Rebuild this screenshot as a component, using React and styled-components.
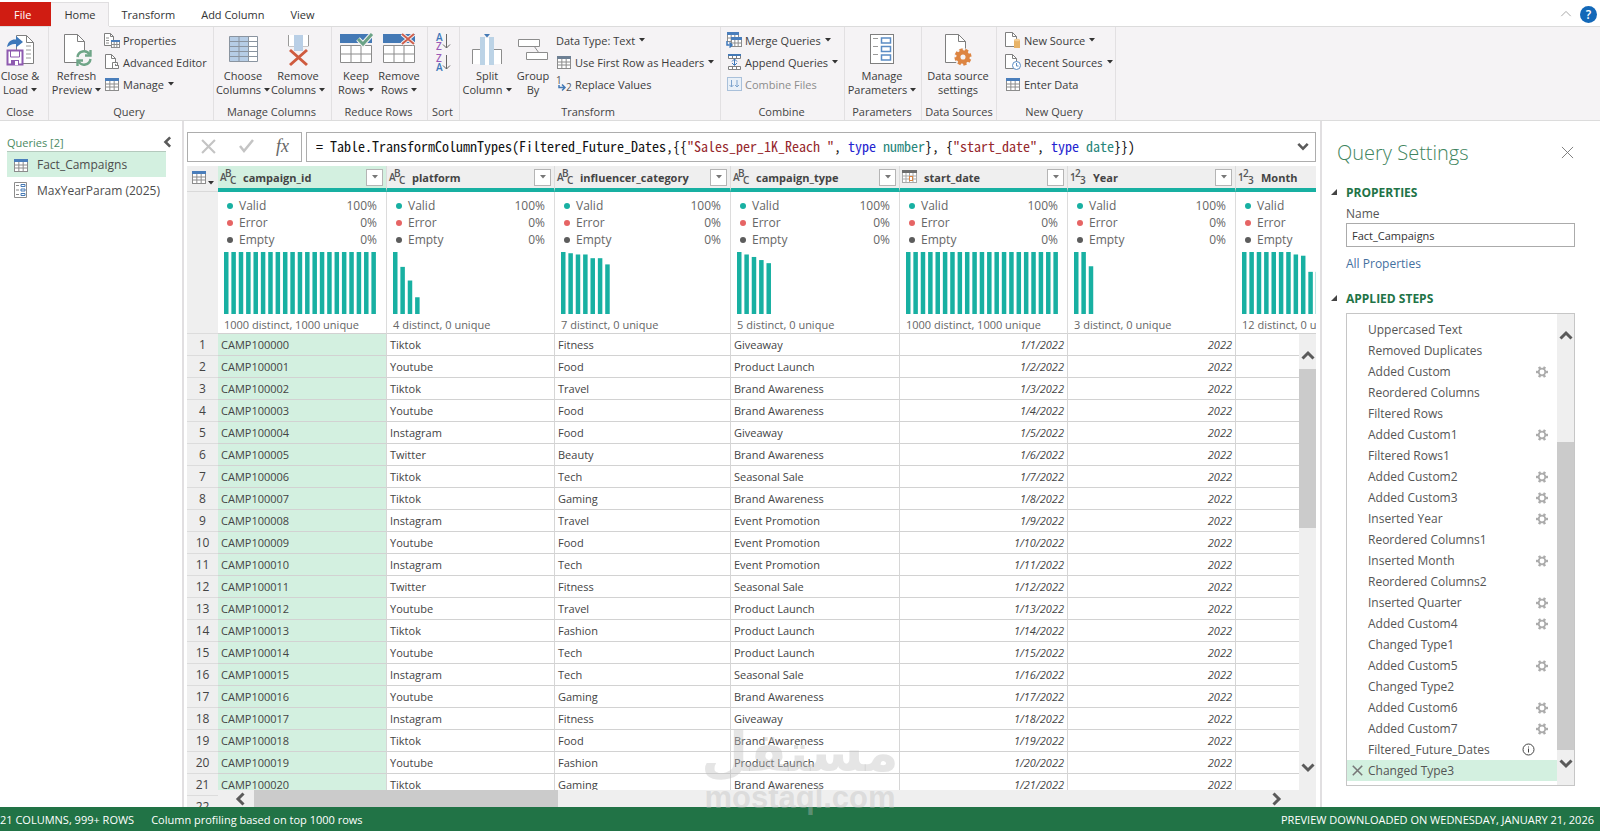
import React from 'react';
import styled, { createGlobalStyle } from 'styled-components';

const GlobalStyle = createGlobalStyle`
  * {
    box-sizing: border-box;
  }

  body {
    margin: 0;
    background: #fff;
    color: #3b3b3b;
    font-family: 'Open Sans', 'Noto Sans', sans-serif;
    font-size: 11px;
  }

  button {
    padding: 0;
    border: 0;
    background: none;
    color: inherit;
    font: inherit;
    cursor: pointer;
  }

  svg {
    display: block;
    flex: none;
    overflow: visible;
  }
`;

const VALUES = [
  ['Tiktok', 'Fitness', 'Giveaway'],
  ['Youtube', 'Food', 'Product Launch'],
  ['Tiktok', 'Travel', 'Brand Awareness'],
  ['Youtube', 'Food', 'Brand Awareness'],
  ['Instagram', 'Food', 'Giveaway'],
  ['Twitter', 'Beauty', 'Brand Awareness'],
  ['Tiktok', 'Tech', 'Seasonal Sale'],
  ['Tiktok', 'Gaming', 'Brand Awareness'],
  ['Instagram', 'Travel', 'Event Promotion'],
  ['Youtube', 'Food', 'Event Promotion'],
  ['Instagram', 'Tech', 'Event Promotion'],
  ['Twitter', 'Fitness', 'Seasonal Sale'],
  ['Youtube', 'Travel', 'Product Launch'],
  ['Tiktok', 'Fashion', 'Product Launch'],
  ['Youtube', 'Tech', 'Product Launch'],
  ['Instagram', 'Tech', 'Seasonal Sale'],
  ['Youtube', 'Gaming', 'Brand Awareness'],
  ['Instagram', 'Fitness', 'Giveaway'],
  ['Tiktok', 'Food', 'Brand Awareness'],
  ['Youtube', 'Fashion', 'Product Launch'],
  ['Tiktok', 'Gaming', 'Brand Awareness'],
];

const FULL = Array(21).fill(1);

const COLUMNS = [
  { name: 'campaign_id', type: 'text', width: 169, selected: true, summary: '1000 distinct, 1000 unique', bars: FULL },
  { name: 'platform', type: 'text', width: 168, summary: '4 distinct, 0 unique', bars: [1, 0.76, 0.54, 0.27] },
  { name: 'influencer_category', type: 'text', width: 176, summary: '7 distinct, 0 unique', bars: [1, 0.98, 0.96, 0.96, 0.9, 0.9, 0.8] },
  { name: 'campaign_type', type: 'text', width: 169, summary: '5 distinct, 0 unique', bars: [1, 0.96, 0.92, 0.87, 0.82] },
  { name: 'start_date', type: 'date', width: 168, summary: '1000 distinct, 1000 unique', bars: FULL },
  { name: 'Year', type: 'number', width: 168, summary: '3 distinct, 0 unique', bars: [1, 1, 0.77] },
  { name: 'Month', type: 'number', width: 168, summary: '12 distinct, 0 unique', bars: [1, 1, 1, 1, 1, 1, 1, 0.96, 0.94, 0.68, 0.68, 0.68] },
];

const STEPS = [
  { name: 'Uppercased Text' },
  { name: 'Removed Duplicates' },
  { name: 'Added Custom', gear: true },
  { name: 'Reordered Columns' },
  { name: 'Filtered Rows' },
  { name: 'Added Custom1', gear: true },
  { name: 'Filtered Rows1' },
  { name: 'Added Custom2', gear: true },
  { name: 'Added Custom3', gear: true },
  { name: 'Inserted Year', gear: true },
  { name: 'Reordered Columns1' },
  { name: 'Inserted Month', gear: true },
  { name: 'Reordered Columns2' },
  { name: 'Inserted Quarter', gear: true },
  { name: 'Added Custom4', gear: true },
  { name: 'Changed Type1' },
  { name: 'Added Custom5', gear: true },
  { name: 'Changed Type2' },
  { name: 'Added Custom6', gear: true },
  { name: 'Added Custom7', gear: true },
  { name: 'Filtered_Future_Dates', info: true },
  { name: 'Changed Type3', selected: true },
];

/* ---------- icons ---------- */

const Caret = ({ color = '#333' }) => (
  <svg width="6" height="4" viewBox="0 0 6 4"><path d="M0 0h6L3 3.5z" fill={color} /></svg>
);

const Chevron = ({ dir = 'down', size = 14, color = '#5a5a5a', thick = 3 }) => {
  const turn = { down: 0, left: 90, up: 180, right: 270 }[dir];
  return (
    <svg width={size} height={size} viewBox="0 0 14 14">
      <path d="M1.5 4.5L7 10l5.500-5.500" fill="none" stroke={color} strokeWidth={thick} transform={`rotate(${turn} 7 7)`} />
    </svg>
  );
};

const Gear = ({ size = 12, color = '#acacac', teeth = 6, ring = 3 }) => (
  <svg width={size} height={size} viewBox="0 0 20 20">
    <circle cx="10" cy="10" r="5.500" fill="none" stroke={color} strokeWidth={ring} />
    {Array.from({ length: teeth }, (_, i) => (
      <rect key={i} x="8" y="0" width="4" height="4" fill={color} transform={`rotate(${(i * 360) / teeth + 30} 10 10)`} />
    ))}
  </svg>
);

const PageShape = ({ x = 0, y = 0, w = 20, h = 27, fold = 7 }) => (
  <g fill="#fff" stroke="#7f7f7f">
    <path d={`M${x} ${y}h${w - fold}l${fold} ${fold}v${h - fold}h${-w}z`} />
    <path d={`M${x + w - fold} ${y}v${fold}h${fold}`} fill="none" />
  </g>
);

const TableShape = ({ x = 0, y = 0, w = 13, h = 12, cols = 3, rows = 3, head = '#4a7ebb', headH = 3, line = '#8c8c8c' }) => (
  <g>
    <rect x={x + 0.5} y={y + 0.5} width={w} height={h} fill="#fff" stroke={line} />
    <path
      stroke={line}
      d={[
        ...Array.from({ length: cols - 1 }, (_, i) => `M${x + 0.5 + ((i + 1) * w) / cols} ${y + headH}V${y + h}`),
        ...Array.from({ length: rows - 1 }, (_, i) => `M${x} ${y + headH + ((i + 1) * (h - headH)) / rows}h${w}`),
      ].join('')}
    />
    <rect x={x} y={y} width={w + 1} height={headH} fill={head} />
  </g>
);

const CloseLoadIcon = () => (
  <svg width="30" height="34" viewBox="0 0 30 34">
    <PageShape x={11.5} y={2.5} w={17} h={28} />
    <path d="M21 13h5M21 17h5M21 21h5M21 25h5" stroke="#9a9a9a" />
    <path d="M2 14c1-6 5-8 9-7.500V3l7 6-7 5.500V11c-4-.5-6 1-9 3z" fill="#3d78ba" />
    <path d="M2.500 17.500h15v14h-15z" fill="#fff" stroke="#8e5ab0" strokeWidth="2" />
    <path d="M5.500 18h9v6h-9z" fill="#fff" stroke="#8e5ab0" />
    <path d="M6 27h8v5H6z" fill="#8e5ab0" />
    <path d="M10 28h3v4h-3z" fill="#fff" />
  </svg>
);

const RefreshIcon = () => (
  <svg width="30" height="34" viewBox="0 0 30 34">
    <PageShape x={2.5} y={1.5} w={20} h={28} />
    <circle cx="22" cy="25" r="8" fill="#f5f3f5" />
    <g fill="none" stroke="#6fa588" strokeWidth="2.400">
      <path d="M15.500 24a6.500 6.500 0 0 1 12-2.500M28.500 26a6.500 6.500 0 0 1-12 2.500" />
      <path d="M28.500 17v5.500H23M15.500 33v-5.500H21" />
    </g>
  </svg>
);

const ChooseColumnsIcon = () => (
  <svg width="30" height="34" viewBox="0 0 30 34">
    <rect x="1.500" y="3.500" width="28" height="25" fill="#fff" />
    <rect x="1.500" y="3.500" width="19" height="25" fill="#b6cde6" />
    <path d="M1.500 3.500h28v25h-28zM11 3v25M20.500 3v25M1 8.500h28M1 13.500h28M1 18.500h28M1 23.500h28" fill="none" stroke="#8a94a0" />
  </svg>
);

const RemoveColumnsIcon = () => (
  <svg width="30" height="34" viewBox="0 0 30 34">
    <path d="M5.500 2v11h6M25.500 2v11h-6" fill="none" stroke="#9a9a9a" />
    <path d="M6 2h5v11H6zM20 2h5v11h-5z" fill="#fff" />
    <path d="M11 2h9v16h-9z" fill="#b9cfe6" />
    <path d="M7 17l17 15M24 17L7 32" stroke="#cf5b3f" strokeWidth="3" />
  </svg>
);

const RowsIcon = ({ remove }) => (
  <svg width="34" height="34" viewBox="0 0 34 34">
    <rect x="1" y="1" width="32" height="9" fill="#4479b5" />
    <path d="M1.500 12.500h31v17h-31zM12 12.500v17M22 12.500v17M1 21h31" fill="#fff" stroke="#8c8c8c" />
    {remove ? (
      <path d="M20 1l12 10M32 1L20 11" stroke="#f5f3f5" strokeWidth="4" />
    ) : (
      <path d="M19 6l5 5 9-10" stroke="#f5f3f5" strokeWidth="5" fill="none" />
    )}
    {remove ? (
      <path d="M20 1l12 10M32 1L20 11" stroke="#cf5f4c" strokeWidth="2" />
    ) : (
      <path d="M19 6l5 5 9-10" stroke="#6ba386" strokeWidth="3" fill="none" />
    )}
  </svg>
);

const SortIcon = ({ top, bottom, topColor, bottomColor }) => (
  <svg width="16" height="18" viewBox="0 0 16 18" fontSize="10" fontWeight="600">
    <text x="0" y="8" fill={topColor}>{top}</text>
    <text x="0" y="17" fill={bottomColor}>{bottom}</text>
    <path d="M10.500 1v14M7 11.500l3.500 3.500 3.500-3.500" fill="none" stroke="#666" />
  </svg>
);

const SplitIcon = () => (
  <svg width="32" height="34" viewBox="0 0 32 34">
    <path d="M1.500 31V16.500h8V31M22.500 31V16.500h8V31" fill="#fff" stroke="#8c8c8c" />
    <path d="M9 4h5v28H9zM18 4h5v28h-5z" fill="#bcd3e6" />
    <path d="M14 5h4v27h-4z" fill="#fff" />
    <path d="M13 1h6l-3 3.500z" fill="#4479b5" />
  </svg>
);

const GroupIcon = () => (
  <svg width="32" height="34" viewBox="0 0 32 34">
    <path d="M17 13l5 7" stroke="#8c8c8c" />
    <path d="M1.500 6.500h21v7h-21zM9.500 19.500h21v7h-21z" fill="#fff" stroke="#8c8c8c" />
  </svg>
);

const ParametersIcon = () => (
  <svg width="26" height="34" viewBox="0 0 26 34">
    <rect x="1.500" y="1.500" width="23" height="29" fill="#fff" stroke="#7f7f7f" />
    <path d="M4 5.500h5M4 13.500h5M4 21.500h5" stroke="#999" />
    <path d="M12.500 5h9v5h-9zM12.500 13.500h9v5h-9zM12.500 22h9v5h-9z" fill="#fff" stroke="#5b8cc4" strokeWidth="1.500" />
  </svg>
);

const SourceSettingsIcon = () => (
  <svg width="28" height="34" viewBox="0 0 28 34">
    <PageShape x={1.5} y={1.5} w={20} h={28} />
    <circle cx="19" cy="24" r="9" fill="#f5f3f5" />
    <g transform="translate(10.500 15.500)">
      <Gear size={17} color="#dd8542" teeth={8} ring={5} />
    </g>
  </svg>
);

const SmallTableIcon = ({ head }) => (
  <svg width="16" height="16" viewBox="0 0 16 16">
    <TableShape x={1} y={2} w={13} h={12} head={head} />
  </svg>
);

const PropertiesIcon = () => (
  <svg width="16" height="16" viewBox="0 0 16 16">
    <PageShape x={0.5} y={1.5} w={9} h={12} fold={3} />
    <path d="M2 6h3M2 8.500h3M2 11h3" stroke="#8c8c8c" />
    <TableShape x={7} y={8} w={8} h={7} cols={3} rows={2} headH={2} />
  </svg>
);

const EditorIcon = () => (
  <svg width="16" height="16" viewBox="0 0 16 16">
    <PageShape x={1.5} y={0.5} w={10} h={14} fold={4} />
    <path d="M8.500 8.500h5v3h1M8.500 8.500v6h6v-3H11" fill="#fff" stroke="#7f7f7f" />
  </svg>
);

const ReplaceIcon = () => (
  <svg width="16" height="16" viewBox="0 0 16 16" fontSize="10" fill="#555">
    <text x="0" y="8">1</text>
    <text x="10" y="15">2</text>
    <path d="M3 9v2.500h5M6 8.500l3 3-3 3" fill="none" stroke="#4479b5" strokeWidth="1.500" />
  </svg>
);

const MergeIcon = () => (
  <svg width="16" height="16" viewBox="0 0 16 16">
    <TableShape x={1} y={0} w={11} h={9} cols={3} rows={2} />
    <TableShape x={5} y={5} w={10} h={9} cols={3} rows={2} />
    <path d="M1 9v4h4M3.500 10.500L6 13l-2.500 2.500" fill="none" stroke="#3d78ba" strokeWidth="1.500" />
  </svg>
);

const AppendIcon = () => (
  <svg width="16" height="16" viewBox="0 0 16 16">
    <path d="M2.500 1.500h12v3h-12zM6.500 1v3M10.500 1v3M2.500 12.500h12v3h-12zM6.500 12v3M10.500 12v3" fill="#fff" stroke="#7f7f7f" />
    <path d="M2 1h13" stroke="#4479b5" strokeWidth="2" />
    <path d="M8.500 5v6M6 7.500L8.500 5 11 7.500M6 9l2.500 2.500L11 9" fill="none" stroke="#3d78ba" />
  </svg>
);

const CombineIcon = () => (
  <svg width="16" height="16" viewBox="0 0 16 16">
    <rect x="1.500" y="1.500" width="14" height="13" fill="#e9f0f8" stroke="#a9c0da" />
    <path d="M5.500 4v7M3.500 9l2 2 2-2M11 4v7M9 9l2 2 2-2" fill="none" stroke="#7da3cd" />
  </svg>
);

const NewSourceIcon = () => (
  <svg width="16" height="16" viewBox="0 0 16 16">
    <PageShape x={0.5} y={0.5} w={11} h={14} fold={4} />
    <path d="M9 8h6v8H9z" fill="#e8b368" />
    <ellipse cx="12" cy="8" rx="3" ry="1.200" fill="#f2cd94" />
  </svg>
);

const RecentIcon = () => (
  <svg width="16" height="16" viewBox="0 0 16 16">
    <PageShape x={0.5} y={0.5} w={11} h={14} fold={4} />
    <circle cx="11.500" cy="11.500" r="4" fill="#fff" stroke="#5b8cc4" />
    <path d="M11.500 9v3h2" fill="none" stroke="#5b8cc4" />
  </svg>
);

const ParamQueryIcon = () => (
  <svg width="14" height="16" viewBox="0 0 14 16">
    <path d="M.5.500h12v15H.5z" fill="#fff" stroke="#8c8c8c" />
    <path d="M2 3.500h3M2 8h3M2 12.500h3" stroke="#888" />
    <path d="M7 2.500h4v2H7zM7 7h4v2H7zM7 11.500h4v2H7z" fill="#fff" stroke="#4479b5" />
  </svg>
);

const TypeIcon = ({ type }) => {
  if (type === 'date') {
    return (
      <svg width="16" height="16" viewBox="0 0 16 16">
        <TableShape x={0} y={1} w={14} h={12} cols={4} rows={3} head="#6d6d6d" line="#a9a9a9" />
        <rect x="7.500" y="7.500" width="3" height="4" fill="#fff" stroke="#dd8542" />
      </svg>
    );
  }
  const [a, b, c] = type === 'text' ? ['A', 'B', 'C'] : ['1', '2', '3'];
  return (
    <svg width="17" height="18" viewBox="0 0 17 18" fontSize="10" fontWeight="600" fill="#555">
      <text x="0" y="13">{a}</text>
      <text x="5" y="9">{b}</text>
      <text x="10" y="16">{c}</text>
    </svg>
  );
};

const CrossIcon = ({ size = 14, color = '#777', width = 1 }) => (
  <svg width={size} height={size} viewBox="0 0 14 14">
    <path d="M1 1l12 12M13 1L1 13" stroke={color} strokeWidth={width} />
  </svg>
);

const InfoIcon = () => (
  <svg width="13" height="13" viewBox="0 0 13 13">
    <circle cx="6.500" cy="6.500" r="5.500" fill="none" stroke="#444" />
    <path d="M6.500 5.500v4M6.500 3.500v1" stroke="#444" />
  </svg>
);

const FoldMark = () => (
  <svg width="6" height="6" viewBox="0 0 6 6"><path d="M6 0v6H0z" fill="#444" /></svg>
);

/* ---------- layout ---------- */

const Window = styled.div`
  position: relative;
  display: flex;
  flex-direction: column;
  height: 100vh;
  overflow: hidden;
`;

const TabBar = styled.nav`
  display: flex;
  align-items: stretch;
  height: 26px;
  padding-top: 2px;
`;

const Tab = styled.button`
  padding: 0 13px;
  color: ${(p) => (p.$file ? '#fff' : '#333')};
  background: ${(p) => (p.$file ? '#d01c12' : p.$active ? '#f5f3f5' : 'transparent')};
  box-shadow: ${(p) => (p.$active ? 'inset -1px 1px #e0dee0, 0 1px #f5f3f5' : 'none')};
  position: relative;
  z-index: 1;

  ${(p) => p.$file && 'padding: 0 20px 0 14px;'}
`;

const TabTools = styled.div`
  display: flex;
  align-items: center;
  gap: 8px;
  margin-left: auto;
  padding-right: 3px;
`;

const HelpButton = styled.button`
  width: 17px;
  height: 17px;
  border-radius: 50%;
  background: #1368b8;
  color: #fff;
  font-size: 12px;
  font-weight: 600;
  line-height: 17px;
`;

const RibbonBar = styled.header`
  display: flex;
  flex: none;
  background: #f5f3f5;
  border-top: 1px solid #dcdcdc;
  border-bottom: 1px solid #dcdcdc;
`;

const Group = styled.section`
  display: flex;
  flex-direction: column;
  width: ${(p) => p.$w}px;
  border-right: 1px solid #e2e0e2;
`;

const GroupBody = styled.div`
  display: flex;
  height: 77px;
`;

const GroupLabel = styled.div`
  height: 16px;
  padding-right: ${(p) => p.$pad || 0}px;
  line-height: 15px;
  text-align: center;
  white-space: nowrap;
  color: #444;
`;

const Large = styled.button`
  display: flex;
  flex-direction: column;
  align-items: center;
  gap: 2px;
  width: ${(p) => p.$w}px;
  padding-top: 6px;
  line-height: 14px;
  white-space: nowrap;
`;

const LabelLine = styled.span`
  display: flex;
  align-items: center;
  justify-content: center;
  gap: 3px;
`;

const SmallList = styled.div`
  display: flex;
  flex-direction: column;
  padding: 2px 0 0 ${(p) => p.$pad || 0}px;
`;

const Small = styled.button`
  display: flex;
  align-items: center;
  gap: 3px;
  height: 22px;
  white-space: nowrap;

  &:disabled {
    color: #8c8c8c;
  }
`;

const SmallText = styled.span`
  padding-right: 1px;
`;

const SortList = styled.div`
  display: flex;
  flex-direction: column;
  gap: 3px;
  padding: 6px 0 0 8px;
`;

const Main = styled.div`
  display: flex;
  flex: 1;
  min-height: 0;
`;

const QueriesPane = styled.aside`
  width: 184px;
  padding: 10px 16px 0 7px;
  border-right: 2px solid #e1dfe1;
`;

const QueriesTitle = styled.div`
  display: flex;
  align-items: center;
  justify-content: space-between;
  height: 20px;
  margin-right: -8px;
  padding-top: 2px;
  color: #4b8a62;
`;

const QueryItem = styled.button`
  display: flex;
  align-items: center;
  gap: 8px;
  width: 100%;
  height: 26px;
  padding-left: 6px;
  background: ${(p) => (p.$active ? '#d3f0e0' : 'transparent')};
  border-top: ${(p) => (p.$active ? '1px solid #b4c9bd' : '0')};
  color: #4d4d4d;
  font-size: 12px;
  white-space: nowrap;
`;

const QueryIcon = styled.span`
  display: flex;
  justify-content: center;
  width: 16px;
`;

const Editor = styled.main`
  display: flex;
  flex: 1;
  flex-direction: column;
  min-width: 0;
  padding: 11px 4px 0 3px;
`;

const FormulaRow = styled.div`
  display: flex;
  gap: 4px;
  flex: none;
  height: 30px;
  margin-bottom: 4px;
`;

const FormulaTools = styled.div`
  display: flex;
  align-items: center;
  justify-content: space-between;
  width: 115px;
  padding: 0 12px 2px 13px;
  border: 1px solid #adadad;
`;

const FxButton = styled.button`
  color: #666;
  font-family: 'Liberation Serif', serif;
  font-size: 18px;
  font-style: italic;
`;

const FormulaBox = styled.div`
  display: flex;
  flex: 1;
  align-items: center;
  min-width: 0;
  padding: 0 6px 2px 9px;
  border: 1px solid #adadad;
`;

const Code = styled.code`
  flex: 1;
  overflow: hidden;
  color: #111;
  font-family: 'Noto Sans Mono CJK SC', 'DejaVu Sans Mono', monospace;
  font-size: 14px;
  line-height: 20px;
  white-space: pre;
`;

const Str = styled.span`
  color: #96282d;
`;

const Keyword = styled.span`
  color: #2424d0;
`;

const TypeName = styled.span`
  color: #26857a;
`;

const GridArea = styled.div`
  position: relative;
  flex: 1;
  min-height: 0;
  overflow: hidden;
`;

const Table = styled.table`
  width: 1217px;
  table-layout: fixed;
  border-collapse: separate;
  border-spacing: 0;
`;

const Corner = styled.th`
  width: 31px;
  height: 22px;
  padding: 0 0 4px 4px;
  background: #efefef;
  border-bottom: 1px solid #d9d9d9;
`;

const CornerInner = styled.button`
  display: flex;
  align-items: flex-end;
  gap: 1px;
`;

const HeadCell = styled.th`
  height: 26px;
  padding: 0;
  background: ${(p) => (p.$selected ? '#d3f0e0' : '#efefef')};
  border-right: 1px solid #dcdcdc;
  border-bottom: 4px solid #18b0a2;
  color: #444;
  font-size: 11px;
  font-weight: 700;
`;

const HeadInner = styled.div`
  display: flex;
  align-items: center;
  gap: 6px;
  padding: 0 3px 0 2px;
`;

const HeadName = styled.span`
  flex: 1;
  text-align: left;
`;

const FilterButton = styled.button`
  display: flex;
  align-items: center;
  justify-content: center;
  width: 17px;
  height: 17px;
  border: 1px solid #b5b5b5;
  background: #fff;
`;

const ProfileCell = styled.td`
  height: 142px;
  padding: 5px 9px 0 6px;
  border-right: 1px solid #dcdcdc;
  border-bottom: 1px solid #d2d2d2;
  color: #666;
  vertical-align: top;
`;

const Quality = styled.div`
  display: flex;
  align-items: center;
  height: 17px;
  padding-left: 3px;
  font-size: 12px;
`;

const Dot = styled.i`
  width: 6px;
  height: 6px;
  margin-right: 6px;
  border-radius: 50%;
  background: ${(p) => p.$color};
`;

const Percent = styled.span`
  margin-left: auto;
`;

const Bars = styled.svg`
  width: 152px;
  height: 62px;
  margin-top: 4px;
`;

const Summary = styled.div`
  height: 18px;
  padding-top: 2px;
  line-height: 18px;
  white-space: nowrap;
`;

const RowHead = styled.th`
  height: 22px;
  padding: 0;
  background: #efefef;
  border-bottom: ${(p) => (p.$plain ? 0 : '1px solid #dcdcdc')};
  color: #444;
  font-size: 12px;
  font-weight: 400;
  line-height: 16px;
`;

const Cell = styled.td`
  height: 22px;
  padding: 0 3px;
  overflow: hidden;
  background: ${(p) => (p.$selected ? '#d3f0e0' : '#fff')};
  border-right: 1px solid #d6d6d6;
  border-bottom: 1px solid #d2d2d2;
  color: #444;
  line-height: 16px;
  white-space: nowrap;

  ${(p) => p.$num && 'font-style: italic; text-align: right;'}
`;

const VScroll = styled.div`
  position: absolute;
  top: 168px;
  right: 0;
  bottom: 0;
  display: flex;
  flex-direction: column;
  align-items: center;
  justify-content: space-between;
  width: 17px;
  padding: 15px 0 33px;
  background: #efefef;
`;

const VThumb = styled.div`
  width: 100%;
  height: 159px;
  margin: 6px 0 auto;
  background: #cbcbcb;
`;

const HScroll = styled.div`
  position: absolute;
  right: 0;
  bottom: 0;
  left: 31px;
  display: flex;
  align-items: center;
  height: 17px;
  padding: 0 33px 0 16px;
  background: #efefef;
`;

const HThumb = styled.div`
  width: 29%;
  height: 100%;
  margin: 0 auto 0 6px;
  background: #cbcbcb;
`;

const SettingsPane = styled.aside`
  display: flex;
  flex-direction: column;
  width: 280px;
  padding: 13px 25px 21px 15px;
  border-left: 2px solid #e1dfe1;
`;

const PaneTitle = styled.div`
  display: flex;
  align-items: center;
  justify-content: space-between;
  height: 36px;
  margin-bottom: 14px;
  padding-right: 1px;

  h1 {
    margin: 0;
    color: #3f8560;
    font-size: 20px;
    font-weight: 300;
  }
`;

const SectionTitle = styled.h2`
  display: flex;
  align-items: center;
  gap: 9px;
  height: 16px;
  margin: 0 0 0 -6px;
  color: #217346;
  font-size: 12px;
  font-weight: 700;
  white-space: nowrap;
`;

const Field = styled.div`
  display: flex;
  flex-direction: column;
  align-items: flex-start;
  margin: 5px 0 17px 9px;
  font-size: 12px;

  label {
    line-height: 18px;
    color: #555;
  }

  input {
    width: 100%;
    height: 24px;
    padding: 0 5px;
    border: 1px solid #ababab;
    border-radius: 0;
    color: #333;
    font: inherit;
    font-size: 11px;
  }

  a {
    margin-top: 8px;
    color: #44709f;
    line-height: 18px;
    text-decoration: none;
  }
`;

const StepsBox = styled.div`
  display: flex;
  flex: 1;
  min-height: 0;
  margin: 7px 0 0 9px;
  border: 1px solid #c6c6c6;
`;

const StepList = styled.ol`
  display: flex;
  flex: 1;
  flex-direction: column;
  justify-content: flex-end;
  margin: 0;
  padding: 0 0 4px;
  overflow: hidden;
  list-style: none;
`;

const Step = styled.li`
  display: flex;
  flex: none;
  align-items: center;
  height: 21px;
  padding: 0 9px 0 5px;
  background: ${(p) => (p.$selected ? '#d3f0e0' : 'transparent')};
  color: #555;
  font-size: 12px;
  white-space: nowrap;
`;

const StepMark = styled.span`
  width: 16px;
`;

const StepTool = styled.button`
  margin-left: auto;
  margin-right: ${(p) => (p.$inset ? 13 : 0)}px;
`;

const StepScroll = styled.div`
  display: flex;
  flex-direction: column;
  align-items: center;
  width: 17px;
  padding: 15px 0;
  background: #efefef;
`;

const StepThumb = styled.div`
  flex: 1;
  width: 100%;
  margin: 99px 0 6px;
  background: #cbcbcb;
`;

const StatusBar = styled.footer`
  display: flex;
  flex: none;
  gap: 17px;
  height: 24px;
  padding: 0 6px 0 0;
  background: #217346;
  color: #fff;
  line-height: 25px;
  white-space: nowrap;
`;

const StatusRight = styled.span`
  margin-left: auto;
`;

const Watermark = styled.div`
  position: absolute;
  right: 704px;
  bottom: 16px;
  display: flex;
  flex-direction: column;
  align-items: center;
  width: 192px;
  color: rgba(190, 190, 190, 0.4);
  font-weight: 700;
  white-space: nowrap;
  pointer-events: none;
`;

const WatermarkArabic = styled.span`
  font-family: 'DejaVu Sans', sans-serif;
  font-size: 54px;
  line-height: 56px;
`;

const WatermarkLatin = styled.span`
  font-family: 'Liberation Sans', sans-serif;
  font-size: 31px;
  line-height: 34px;
`;

/* ---------- parts ---------- */

const LargeButton = ({ icon, lines, caret, width }) => (
  <Large type="button" $w={width}>
    {icon}
    <span>
      <LabelLine>{lines[0]}</LabelLine>
      <LabelLine>{lines[1]}{caret && <Caret />}</LabelLine>
    </span>
  </Large>
);

const SmallButton = ({ icon, text, caret, disabled }) => (
  <Small type="button" disabled={disabled}>
    {icon}
    <SmallText>{text}</SmallText>
    {caret && <Caret />}
  </Small>
);

const Ribbon = () => (
  <RibbonBar>
    <Group $w={49}>
      <GroupBody>
        <LargeButton width={40} icon={<CloseLoadIcon />} lines={['Close &', 'Load']} caret />
      </GroupBody>
      <GroupLabel $pad={8}>Close</GroupLabel>
    </Group>
    <Group $w={165}>
      <GroupBody>
        <LargeButton width={55} icon={<RefreshIcon />} lines={['Refresh', 'Preview']} caret />
        <SmallList>
          <SmallButton icon={<PropertiesIcon />} text="Properties" />
          <SmallButton icon={<EditorIcon />} text="Advanced Editor" />
          <SmallButton icon={<SmallTableIcon />} text="Manage" caret />
        </SmallList>
      </GroupBody>
      <GroupLabel $pad={4}>Query</GroupLabel>
    </Group>
    <Group $w={118}>
      <GroupBody>
        <LargeButton width={58} icon={<ChooseColumnsIcon />} lines={['Choose', 'Columns']} caret />
        <LargeButton width={52} icon={<RemoveColumnsIcon />} lines={['Remove', 'Columns']} caret />
      </GroupBody>
      <GroupLabel $pad={2}>Manage Columns</GroupLabel>
    </Group>
    <Group $w={96}>
      <GroupBody>
        <LargeButton width={48} icon={<RowsIcon />} lines={['Keep', 'Rows']} caret />
        <LargeButton width={38} icon={<RowsIcon remove />} lines={['Remove', 'Rows']} caret />
      </GroupBody>
      <GroupLabel $pad={2}>Reduce Rows</GroupLabel>
    </Group>
    <Group $w={32}>
      <GroupBody>
        <SortList>
          <button type="button"><SortIcon top="A" bottom="Z" topColor="#3d78ba" bottomColor="#9b59b6" /></button>
          <button type="button"><SortIcon top="Z" bottom="A" topColor="#9b59b6" bottomColor="#3d78ba" /></button>
        </SortList>
      </GroupBody>
      <GroupLabel $pad={2}>Sort</GroupLabel>
    </Group>
    <Group $w={261}>
      <GroupBody>
        <LargeButton width={54} icon={<SplitIcon />} lines={['Split', 'Column']} caret />
        <LargeButton width={38} icon={<GroupIcon />} lines={['Group', 'By']} />
        <SmallList $pad={4}>
          <SmallButton text="Data Type: Text" caret />
          <SmallButton icon={<SmallTableIcon head="#6d7f93" />} text="Use First Row as Headers" caret />
          <SmallButton icon={<ReplaceIcon />} text="Replace Values" />
        </SmallList>
      </GroupBody>
      <GroupLabel $pad={4}>Transform</GroupLabel>
    </Group>
    <Group $w={124}>
      <GroupBody>
        <SmallList $pad={5}>
          <SmallButton icon={<MergeIcon />} text="Merge Queries" caret />
          <SmallButton icon={<AppendIcon />} text="Append Queries" caret />
          <SmallButton icon={<CombineIcon />} text="Combine Files" disabled />
        </SmallList>
      </GroupBody>
      <GroupLabel $pad={2}>Combine</GroupLabel>
    </Group>
    <Group $w={77}>
      <GroupBody>
        <LargeButton width={74} icon={<ParametersIcon />} lines={['Manage', 'Parameters']} caret />
      </GroupBody>
      <GroupLabel $pad={2}>Parameters</GroupLabel>
    </Group>
    <Group $w={75}>
      <GroupBody>
        <LargeButton width={72} icon={<SourceSettingsIcon />} lines={['Data source', 'settings']} />
      </GroupBody>
      <GroupLabel>Data Sources</GroupLabel>
    </Group>
    <Group $w={119}>
      <GroupBody>
        <SmallList $pad={8}>
          <SmallButton icon={<NewSourceIcon />} text="New Source" caret />
          <SmallButton icon={<RecentIcon />} text="Recent Sources" caret />
          <SmallButton icon={<SmallTableIcon />} text="Enter Data" />
        </SmallList>
      </GroupBody>
      <GroupLabel $pad={4}>New Query</GroupLabel>
    </Group>
  </RibbonBar>
);

const Formula = () => (
  <FormulaRow>
    <FormulaTools>
      <button type="button" aria-label="Cancel"><CrossIcon size={15} color="#c4c4c4" width={2} /></button>
      <button type="button" aria-label="Apply">
        <svg width="15" height="14" viewBox="0 0 15 14">
          <path d="M1 7l4 5 9-11" fill="none" stroke="#c4c4c4" strokeWidth="2.500" />
        </svg>
      </button>
      <FxButton type="button">fx</FxButton>
    </FormulaTools>
    <FormulaBox>
      <Code>
        {'= Table.TransformColumnTypes(Filtered_Future_Dates,{{'}
        <Str>"Sales_per_1K_Reach "</Str>
        {', '}
        <Keyword>type</Keyword> <TypeName>number</TypeName>
        {'}, {'}
        <Str>"start_date"</Str>
        {', '}
        <Keyword>type</Keyword> <TypeName>date</TypeName>
        {'}})'}
      </Code>
      <button type="button" aria-label="Expand formula"><Chevron size={12} thick={3} /></button>
    </FormulaBox>
  </FormulaRow>
);

const Profile = ({ column }) => (
  <ProfileCell>
    <Quality><Dot $color="#18b0a2" />Valid<Percent>100%</Percent></Quality>
    <Quality><Dot $color="#e66464" />Error<Percent>0%</Percent></Quality>
    <Quality><Dot $color="#5c5c5c" />Empty<Percent>0%</Percent></Quality>
    <Bars viewBox="0 0 152 62">
      {column.bars.map((v, i) => (
        <rect key={i} x={i * 7.37} y={62 - v * 62} width="4.500" height={v * 62} fill="#18b0a2" />
      ))}
    </Bars>
    <Summary>{column.summary}</Summary>
  </ProfileCell>
);

const Grid = () => (
  <GridArea>
    <Table>
      <colgroup>
        <col width={31} />
        {COLUMNS.map((c) => <col key={c.name} width={c.width} />)}
      </colgroup>
      <thead>
        <tr>
          <Corner>
            <CornerInner type="button" aria-label="Table menu"><SmallTableIcon /><Caret /></CornerInner>
          </Corner>
          {COLUMNS.map((c) => (
            <HeadCell key={c.name} $selected={c.selected} scope="col">
              <HeadInner>
                <TypeIcon type={c.type} />
                <HeadName>{c.name}</HeadName>
                <FilterButton type="button" aria-label={`Filter ${c.name}`}><Caret color="#777" /></FilterButton>
              </HeadInner>
            </HeadCell>
          ))}
        </tr>
      </thead>
      <tbody>
        <tr>
          <RowHead />
          {COLUMNS.map((c) => <Profile key={c.name} column={c} />)}
        </tr>
        {VALUES.map(([platform, category, type], i) => (
          <tr key={i}>
            <RowHead scope="row">{i + 1}</RowHead>
            <Cell $selected>{`CAMP${100000 + i}`}</Cell>
            <Cell>{platform}</Cell>
            <Cell>{category}</Cell>
            <Cell>{type}</Cell>
            <Cell $num>{`1/${i + 1}/2022`}</Cell>
            <Cell $num>2022</Cell>
            <Cell />
          </tr>
        ))}
        <tr>
          <RowHead scope="row" $plain>22</RowHead>
        </tr>
      </tbody>
    </Table>
    <VScroll>
      <Chevron dir="up" />
      <VThumb />
      <Chevron />
    </VScroll>
    <HScroll>
      <Chevron dir="left" />
      <HThumb />
      <Chevron dir="right" />
    </HScroll>
  </GridArea>
);

const Settings = () => (
  <SettingsPane>
    <PaneTitle>
      <h1>Query Settings</h1>
      <button type="button" aria-label="Close pane"><CrossIcon size={13} /></button>
    </PaneTitle>
    <SectionTitle><FoldMark />PROPERTIES</SectionTitle>
    <Field>
      <label htmlFor="query-name">Name</label>
      <input id="query-name" defaultValue="Fact_Campaigns" />
      <a href="#properties">All Properties</a>
    </Field>
    <SectionTitle><FoldMark />APPLIED STEPS</SectionTitle>
    <StepsBox>
      <StepList>
        {STEPS.map((s) => (
          <Step key={s.name} $selected={s.selected}>
            <StepMark>{s.selected && <CrossIcon size={11} width={2} />}</StepMark>
            {s.name}
            {s.gear && <StepTool type="button" aria-label={`Edit ${s.name}`}><Gear /></StepTool>}
            {s.info && <StepTool type="button" $inset aria-label="Step details"><InfoIcon /></StepTool>}
          </Step>
        ))}
      </StepList>
      <StepScroll>
        <Chevron dir="up" />
        <StepThumb />
        <Chevron />
      </StepScroll>
    </StepsBox>
  </SettingsPane>
);

function App() {
  return (
    <Window>
      <GlobalStyle />
      <TabBar>
        <Tab type="button" $file>File</Tab>
        <Tab type="button" $active>Home</Tab>
        <Tab type="button">Transform</Tab>
        <Tab type="button">Add Column</Tab>
        <Tab type="button">View</Tab>
        <TabTools>
          <button type="button" aria-label="Collapse ribbon"><Chevron dir="up" size={12} thick={1} color="#999" /></button>
          <HelpButton type="button">?</HelpButton>
        </TabTools>
      </TabBar>
      <Ribbon />
      <Main>
        <QueriesPane>
          <QueriesTitle>
            Queries [2]
            <button type="button" aria-label="Collapse queries"><Chevron dir="left" size={12} thick={3} /></button>
          </QueriesTitle>
          <QueryItem type="button" $active><QueryIcon><SmallTableIcon /></QueryIcon>Fact_Campaigns</QueryItem>
          <QueryItem type="button"><QueryIcon><ParamQueryIcon /></QueryIcon>MaxYearParam (2025)</QueryItem>
        </QueriesPane>
        <Editor>
          <Formula />
          <Grid />
        </Editor>
        <Settings />
      </Main>
      <StatusBar>
        <span>21 COLUMNS, 999+ ROWS</span>
        <span>Column profiling based on top 1000 rows</span>
        <StatusRight>PREVIEW DOWNLOADED ON WEDNESDAY, JANUARY 21, 2026</StatusRight>
      </StatusBar>
      <Watermark>
        <WatermarkArabic lang="ar">مستقل</WatermarkArabic>
        <WatermarkLatin>mostaql.com</WatermarkLatin>
      </Watermark>
    </Window>
  );
}

export default App;
